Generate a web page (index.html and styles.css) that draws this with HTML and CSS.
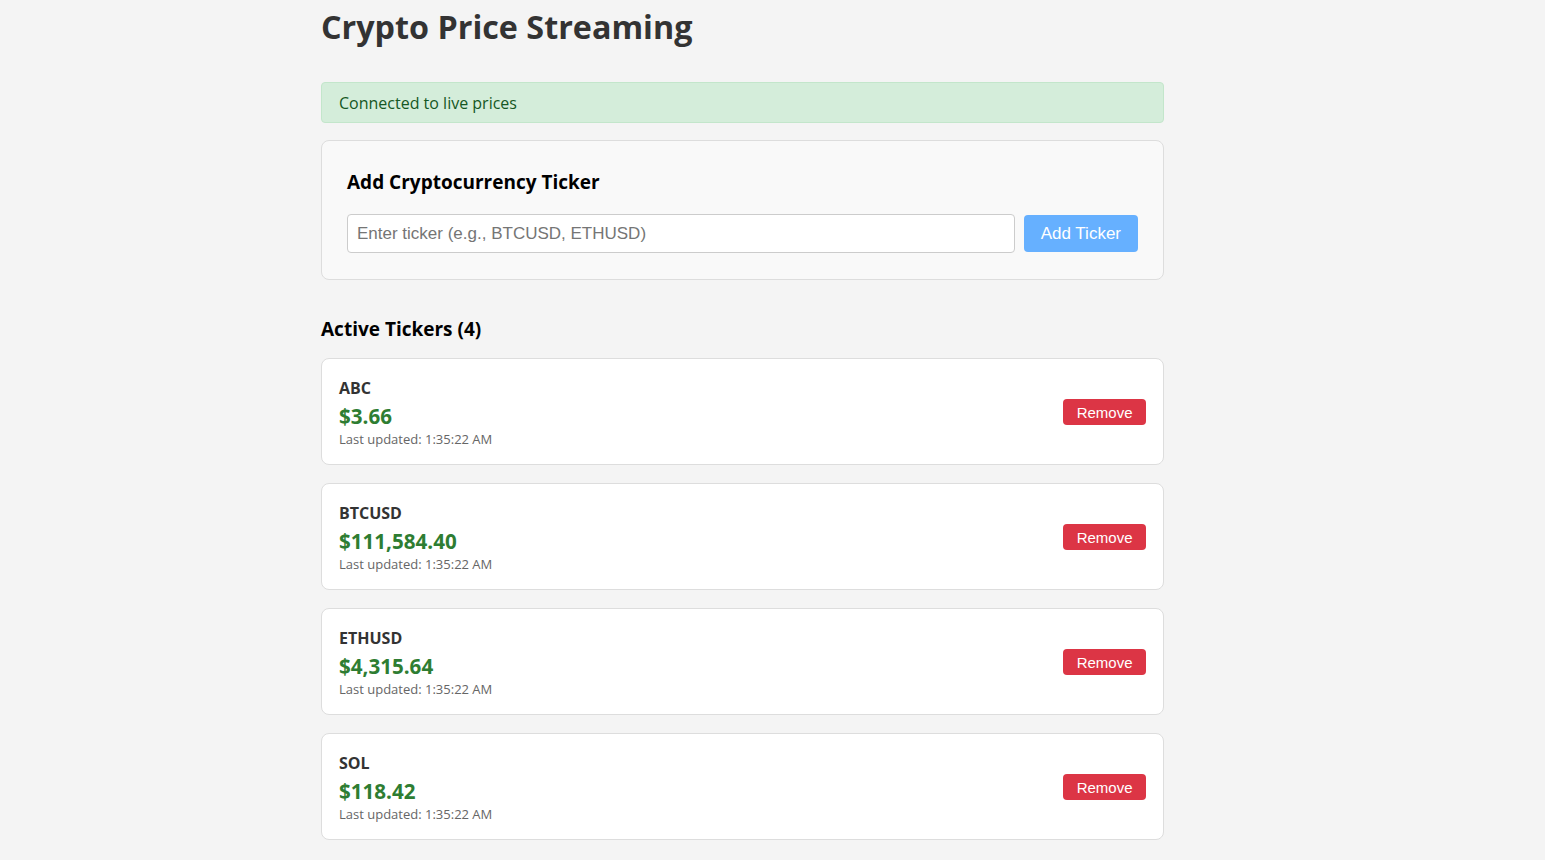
FILE: index.html
```html
<!DOCTYPE html>
<html lang="en">
<head>
<meta charset="utf-8">
<title>Crypto Price Streaming</title>
<link rel="stylesheet" href="styles.css">
</head>
<body>
<div class="container">
  <h1 class="title">Crypto Price Streaming</h1>
  <div class="status">Connected to live prices</div>
  <div class="add-card">
    <h3 class="section-title add-title">Add Cryptocurrency Ticker</h3>
    <div class="add-row">
      <input class="ticker-input" type="text" placeholder="Enter ticker (e.g., BTCUSD, ETHUSD)">
      <button class="add-btn" disabled>Add Ticker</button>
    </div>
  </div>
  <h3 class="section-title list-title">Active Tickers (4)</h3>
  <div class="ticker-list">
    <div class="ticker-card">
      <div class="ticker-info">
        <div class="symbol">ABC</div>
        <div class="price">$3.66</div>
        <div class="updated">Last updated: 1:35:22 AM</div>
      </div>
      <button class="remove-btn">Remove</button>
    </div>
    <div class="ticker-card">
      <div class="ticker-info">
        <div class="symbol">BTCUSD</div>
        <div class="price">$111,584.40</div>
        <div class="updated">Last updated: 1:35:22 AM</div>
      </div>
      <button class="remove-btn">Remove</button>
    </div>
    <div class="ticker-card">
      <div class="ticker-info">
        <div class="symbol">ETHUSD</div>
        <div class="price">$4,315.64</div>
        <div class="updated">Last updated: 1:35:22 AM</div>
      </div>
      <button class="remove-btn">Remove</button>
    </div>
    <div class="ticker-card">
      <div class="ticker-info">
        <div class="symbol">SOL</div>
        <div class="price">$118.42</div>
        <div class="updated">Last updated: 1:35:22 AM</div>
      </div>
      <button class="remove-btn">Remove</button>
    </div>
  </div>
</div>
</body>
</html>
```
FILE: styles.css
```css
* {
  box-sizing: border-box;
}

html, body {
  margin: 0;
  background: #f4f4f4;
}

body {
  padding: 4px 60px 40px 0;
  font-family: "Open Sans", "Noto Sans", sans-serif;
  color: #333;
}

.container {
  width: 843px;
  margin: 0 auto;
}

.title {
  margin: 0 0 34px;
  font-size: 32.3px;
  line-height: 44px;
  font-weight: 700;
  color: #333;
}

.status {
  background: #d4edda;
  border: 1px solid #c3e6cb;
  border-radius: 4px;
  color: #155724;
  font-size: 16px;
  line-height: 21px;
  padding: 10px 17px 8px;
  margin-bottom: 17px;
}

.add-card {
  background: #f9f9f9;
  border: 1px solid #ddd;
  border-radius: 8px;
  padding: 25px 25px 26px;
  margin-bottom: 37px;
}

.section-title {
  font-size: 19px;
  line-height: 25px;
  font-weight: 700;
  color: #000;
}

.add-title {
  margin: 4px 0 19px;
}

.add-row {
  display: flex;
  align-items: center;
  gap: 9px;
}

.ticker-input {
  flex: 1;
  min-width: 0;
  border: 1px solid #ccc;
  border-radius: 4px;
  background: #fff;
  font-family: "Liberation Sans", Arial, sans-serif;
  font-size: 17px;
  line-height: 19px;
  padding: 9px 9px;
  color: #333;
}

.ticker-input::placeholder {
  color: #757575;
}

.add-btn {
  border: none;
  border-radius: 4px;
  background: #66b0ff;
  color: #fff;
  font-family: "Liberation Sans", Arial, sans-serif;
  font-size: 17px;
  line-height: 19px;
  padding: 9px 17px;
}

.list-title {
  margin: 0 0 16px;
}

.ticker-list {
  display: flex;
  flex-direction: column;
  gap: 18px;
}

.ticker-card {
  display: flex;
  align-items: center;
  justify-content: space-between;
  background: #fff;
  border: 1px solid #ddd;
  border-radius: 8px;
  padding: 17px 17px 16px;
}

.symbol {
  font-size: 16px;
  line-height: 24px;
  font-weight: 700;
  color: #333;
}

.price {
  margin-top: 2px;
  font-size: 20.6px;
  line-height: 28px;
  font-weight: 700;
  color: #2e7d32;
}

.updated {
  font-size: 13px;
  line-height: 18px;
  color: #666;
}

.remove-btn {
  border: none;
  border-radius: 4px;
  background: #dc3545;
  color: #fff;
  font-family: "Liberation Sans", Arial, sans-serif;
  font-size: 15px;
  line-height: 17px;
  padding: 5px 13.5px 4px;
}
```
